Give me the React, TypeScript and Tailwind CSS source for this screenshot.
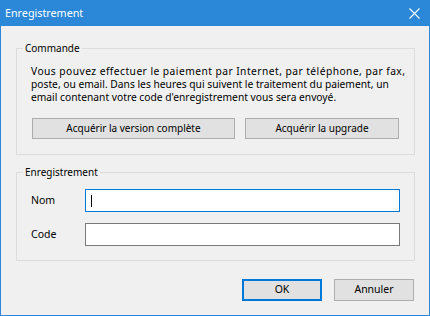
import React from "react";

const font = { fontFamily: '"Noto Sans", "Open Sans", sans-serif' };

function GroupBox({ label, className, children }: { label: string; className?: string; children: React.ReactNode }) {
  return (
    <div className={"relative border border-[#dcdcdc] " + (className ?? "")}>
      <span className="absolute left-[6px] top-[-8px] whitespace-nowrap bg-[#f0f0f0] px-[2px] text-[10px] leading-[15px] text-black">
        {label}
      </span>
      {children}
    </div>
  );
}

export default function App() {
  return (
    <div
      className="flex h-[316px] w-[430px] flex-col bg-[#2b88d8] px-px pb-px text-black"
      style={font}
    >
      <div className="flex h-[26px] shrink-0 items-center justify-between pl-[4px] pr-[9px]">
        <span className="text-[10.75px] leading-none text-white">Enregistrement</span>
        <svg width="11" height="11" viewBox="0 0 11 11" className="mt-[1px]">
          <path d="M0.5 0.5 L10.5 10.5 M10.5 0.5 L0.5 10.5" stroke="#ffffff" strokeWidth="1.1" fill="none" />
        </svg>
      </div>
      <div className="flex flex-1 flex-col bg-[#f0f0f0] pl-[15px] pr-[14px] pt-[22px]">
        <GroupBox label="Commande" className="h-[107px]">
          <div className="whitespace-nowrap pl-[14px] pt-[16px] text-[10.25px] leading-[13px]">
            <p className="tracking-[0.45px]">Vous pouvez effectuer le paiement par Internet, par téléphone, par fax,</p>
            <p>poste, ou email. Dans les heures qui suivent le traitement du paiement, un</p>
            <p>email contenant votre code d'enregistrement vous sera envoyé.</p>
          </div>
          <div className="mt-[14px] flex gap-[10px] pl-[15px]">
            <button className="flex h-[21px] w-[203px] items-center justify-center whitespace-nowrap border border-[#adadad] bg-[#e1e1e1] text-[10px]">
              Acquérir la version complète
            </button>
            <button className="flex h-[21px] w-[154px] items-center justify-center whitespace-nowrap border border-[#adadad] bg-[#e1e1e1] text-[10px]">
              Acquérir la upgrade
            </button>
          </div>
        </GroupBox>
        <GroupBox label="Enregistrement" className="mt-[17px] h-[89px]">
          <div className="flex flex-col gap-[11px] pl-[14px] pr-[14px] pt-[16px] text-[10.5px]">
            <div className="flex items-center">
              <span className="w-[54px]">Nom</span>
              <div className="flex h-[23px] flex-1 items-center border border-[#0078d7] bg-white pl-[5px]">
                <div className="h-[12px] w-px bg-black" />
              </div>
            </div>
            <div className="flex items-center">
              <span className="w-[54px]">Code</span>
              <div className="h-[23px] flex-1 border border-[#7a7a7a] bg-white" />
            </div>
          </div>
        </GroupBox>
        <div className="mt-[18px] flex justify-end gap-[12px] pr-px">
          <button className="flex h-[22px] w-[80px] items-center justify-center border-2 border-[#0078d7] bg-[#e1e1e1] text-[10.5px]">
            OK
          </button>
          <button className="flex h-[22px] w-[80px] items-center justify-center border border-[#adadad] bg-[#e1e1e1] text-[10.5px]">
            Annuler
          </button>
        </div>
      </div>
    </div>
  );
}
